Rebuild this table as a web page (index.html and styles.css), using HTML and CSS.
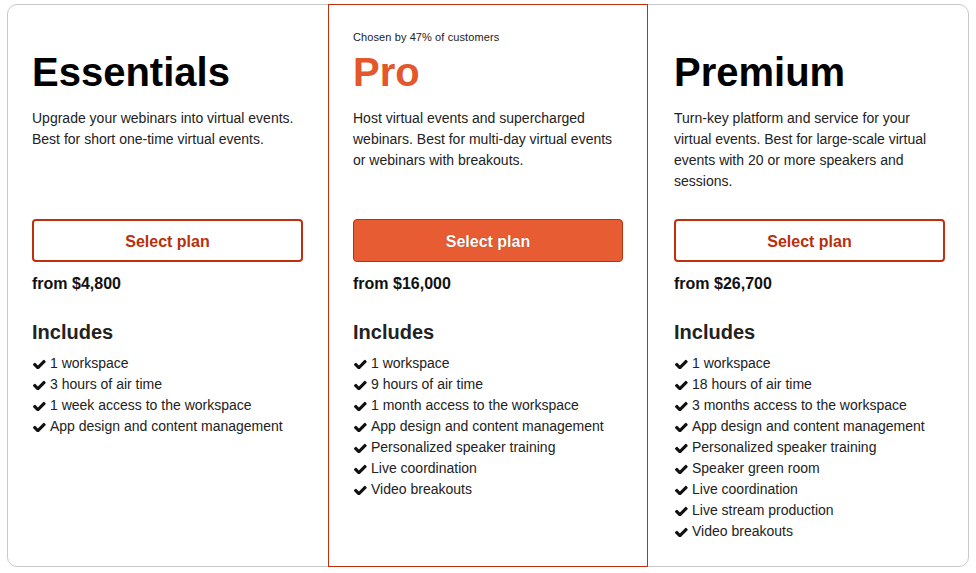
FILE: index.html
```html
<!DOCTYPE html>
<html lang="en">
<head>
<meta charset="utf-8">
<title>Plans</title>
<link rel="stylesheet" href="styles.css">
</head>
<body>
<svg width="0" height="0" class="defs">
  <defs>
    <symbol id="check" viewBox="0 280 1700 1130">
      <path d="M1671 566q0 40-28 68l-724 724-136 136q-28 28-68 28t-68-28l-136-136-362-362q-28-28-28-68t28-68l136-136q28-28 68-28t68 28l294 295 656-657q28-28 68-28t68 28l136 136q28 28 28 68z"/>
    </symbol>
  </defs>
</svg>
<div class="plans">
  <section class="plan">
    <div class="badge"></div>
    <h2 class="name">Essentials</h2>
    <p class="desc">Upgrade your webinars into virtual events. Best for short one-time virtual events.</p>
    <button class="btn">Select plan</button>
    <div class="price">from $4,800</div>
    <h3 class="inc">Includes</h3>
    <ul class="list">
      <li><svg class="ck"><use href="#check"/></svg>1 workspace</li>
      <li><svg class="ck"><use href="#check"/></svg>3 hours of air time</li>
      <li><svg class="ck"><use href="#check"/></svg>1 week access to the workspace</li>
      <li><svg class="ck"><use href="#check"/></svg>App design and content management</li>
    </ul>
  </section>
  <section class="plan plan-pro">
    <div class="badge">Chosen by 47% of customers</div>
    <h2 class="name name-pro">Pro</h2>
    <p class="desc">Host virtual events and supercharged webinars. Best for multi-day virtual events or webinars with breakouts.</p>
    <button class="btn btn-primary">Select plan</button>
    <div class="price">from $16,000</div>
    <h3 class="inc">Includes</h3>
    <ul class="list">
      <li><svg class="ck"><use href="#check"/></svg>1 workspace</li>
      <li><svg class="ck"><use href="#check"/></svg>9 hours of air time</li>
      <li><svg class="ck"><use href="#check"/></svg>1 month access to the workspace</li>
      <li><svg class="ck"><use href="#check"/></svg>App design and content management</li>
      <li><svg class="ck"><use href="#check"/></svg>Personalized speaker training</li>
      <li><svg class="ck"><use href="#check"/></svg>Live coordination</li>
      <li><svg class="ck"><use href="#check"/></svg>Video breakouts</li>
    </ul>
  </section>
  <section class="plan plan-last">
    <div class="badge"></div>
    <h2 class="name">Premium</h2>
    <p class="desc">Turn-key platform and service for your virtual events. Best for large-scale virtual events with 20 or more speakers and sessions.</p>
    <button class="btn">Select plan</button>
    <div class="price">from $26,700</div>
    <h3 class="inc">Includes</h3>
    <ul class="list">
      <li><svg class="ck"><use href="#check"/></svg>1 workspace</li>
      <li><svg class="ck"><use href="#check"/></svg>18 hours of air time</li>
      <li><svg class="ck"><use href="#check"/></svg>3 months access to the workspace</li>
      <li><svg class="ck"><use href="#check"/></svg>App design and content management</li>
      <li><svg class="ck"><use href="#check"/></svg>Personalized speaker training</li>
      <li><svg class="ck"><use href="#check"/></svg>Speaker green room</li>
      <li><svg class="ck"><use href="#check"/></svg>Live coordination</li>
      <li><svg class="ck"><use href="#check"/></svg>Live stream production</li>
      <li><svg class="ck"><use href="#check"/></svg>Video breakouts</li>
    </ul>
  </section>
</div>
</body>
</html>
```
FILE: styles.css
```css
* { box-sizing: border-box; }

html, body { background: #fff; }

body {
  margin: 4px 7px 0;
  font-family: "Liberation Sans", Arial, sans-serif;
  color: #222;
}

.defs { position: absolute; width: 0; height: 0; overflow: hidden; }

.plans {
  display: grid;
  grid-template-columns: 1fr 1fr 1fr;
  border: 1px solid #c8c8c8;
  border-radius: 10px;
  background: #fff;
}

.plan {
  padding: 25px 25px 24px 24px;
  display: flex;
  flex-direction: column;
}

.plan-pro {
  border: 1px solid #c0300e;
  margin: -1px 0;
  padding: 25px 24px 25px;
}

.plan-last { padding-left: 26px; padding-right: 23px; }

.badge {
  height: 14px;
  line-height: 14px;
  font-size: 11px;
  letter-spacing: 0.1px;
  color: #222;
  margin-bottom: 4px;
  white-space: nowrap;
}

.name {
  margin: 0;
  font-size: 40px;
  line-height: 48px;
  font-weight: 700;
  color: #000;
}

.name-pro { color: #e4572c; }

.desc {
  margin: 12px 0 27px;
  font-size: 14px;
  line-height: 21px;
  min-height: 84px;
  color: #222;
}

.btn {
  display: block;
  width: 100%;
  height: 43px;
  border: 2px solid #c0300e;
  border-radius: 4px;
  background: #fff;
  color: #b8300b;
  font-family: "Liberation Sans", Arial, sans-serif;
  font-size: 16px;
  font-weight: 700;
  padding: 2px 0 0;
  cursor: pointer;
}

.btn-primary {
  background: #e85c33;
  border: 1px solid #b8320c;
  color: #fff;
  text-shadow: 0 0 1px rgba(120, 30, 0, 0.7);
}

.price {
  margin-top: 12px;
  font-size: 16px;
  line-height: 20px;
  font-weight: 700;
  color: #111;
}

.inc {
  margin: 26px 0 0;
  font-size: 20px;
  line-height: 24px;
  font-weight: 700;
  color: #222;
}

.list {
  list-style: none;
  margin: 9px 0 0;
  padding: 0;
}

.list li {
  display: flex;
  align-items: center;
  font-size: 14px;
  line-height: 21px;
  color: #222;
  white-space: nowrap;
}

.ck {
  width: 14px;
  height: 10px;
  margin-right: 4px;
  fill: #111;
  flex: none;
}
```
